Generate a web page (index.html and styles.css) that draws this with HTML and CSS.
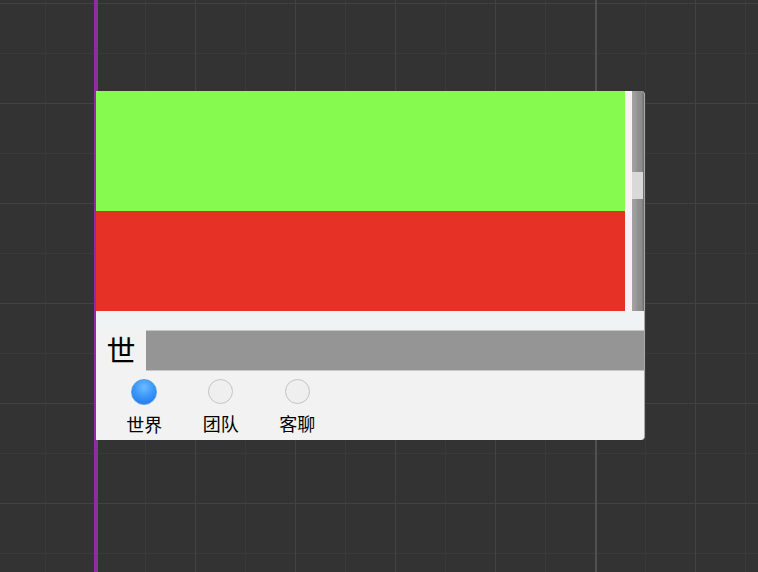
FILE: index.html
```html
<!DOCTYPE html>
<html lang="zh">
<head>
<meta charset="utf-8">
<title>Chat Panel</title>
<link rel="stylesheet" href="styles.css">
</head>
<body>
<div class="canvas">
  <div class="guide"></div>
  <div class="panel">
    <div class="messages">
      <div class="content">
        <div class="block green"></div>
        <div class="block red"></div>
      </div>
      <div class="gutter"></div>
      <div class="scrollbar"><div class="thumb"></div></div>
    </div>
    <div class="spacer"></div>
    <div class="input-row">
      <div class="channel">世</div>
      <div class="field"></div>
    </div>
    <div class="tabs">
      <div class="tab">
        <span class="radio checked"></span>
        <span class="tab-label">世界</span>
      </div>
      <div class="tab">
        <span class="radio"></span>
        <span class="tab-label">团队</span>
      </div>
      <div class="tab">
        <span class="radio"></span>
        <span class="tab-label">客聊</span>
      </div>
    </div>
  </div>
</div>
</body>
</html>
```

FILE: styles.css
```css
html, body {
  margin: 0;
  padding: 0;
}

body {
  width: 758px;
  height: 572px;
  overflow: hidden;
  background-color: #333333;
  font-family: "Noto Sans CJK SC", "Noto Sans", sans-serif;
}

.canvas {
  position: relative;
  width: 758px;
  height: 572px;
  box-sizing: border-box;
  padding: 91px 0 0 96px;
  background-color: #333333;
  background-image:
    linear-gradient(to right, transparent 595px, #505050 595px, #505050 597px, transparent 597px),
    linear-gradient(to right, #424242 1px, transparent 1px),
    linear-gradient(to bottom, #424242 1px, transparent 1px),
    linear-gradient(to right, #3a3a3a 1px, transparent 1px),
    linear-gradient(to bottom, #3a3a3a 1px, transparent 1px);
  background-size:
    100% 100%,
    100px 100%,
    100% 100px,
    50px 100%,
    100% 50px;
  background-position:
    0 0,
    95px 0,
    0 3px,
    45px 0,
    0 3px;
  background-repeat: no-repeat, repeat-x, repeat-y, repeat-x, repeat-y;
}

.guide {
  position: absolute;
  left: 94px;
  top: 0;
  width: 4px;
  height: 100%;
  background: #8a2f9c;
}

.panel {
  position: relative;
  width: 549px;
  height: 349px;
  box-sizing: border-box;
  background: #f2f2f2;
  border-right: 1px solid #a9a9a9;
  border-radius: 0 4px 4px 0;
  overflow: hidden;
  display: flex;
  flex-direction: column;
}

.messages {
  display: flex;
  height: 220px;
  flex: none;
}

.content {
  width: 529px;
  display: flex;
  flex-direction: column;
}

.block.green {
  height: 120px;
  background: #86fa4f;
}

.block.red {
  height: 100px;
  background: #e53126;
}

.gutter {
  width: 7px;
  background: #f6f2f6;
}

.scrollbar {
  position: relative;
  width: 12px;
  background: linear-gradient(to right, #a3a3a3 0, #9a9a9a 4px, #8f8f8f 6px, #8c8c8c 10px, #727272 11px);
}

.thumb {
  position: absolute;
  left: 0;
  top: 81px;
  width: 11px;
  height: 27px;
  background: #d9d9d9;
}

.spacer {
  height: 19px;
  flex: none;
  background: #f0f3f3;
}

.input-row {
  display: flex;
  align-items: center;
  height: 41px;
  flex: none;
}

.channel {
  width: 50px;
  text-align: center;
  font-size: 29px;
  line-height: 36px;
  color: #000000;
  margin-top: -4px;
}

.field {
  flex: 1;
  align-self: stretch;
  box-sizing: border-box;
  background: #959595;
  border-top: 1px solid #c6c6c6;
  border-bottom: 1px solid #c6c6c6;
}

.tabs {
  display: flex;
  padding-left: 10px;
  padding-top: 8px;
}

.tab {
  width: 76.5px;
  display: flex;
  flex-direction: column;
  align-items: center;
}

.radio {
  display: block;
  width: 25px;
  height: 25px;
  box-sizing: border-box;
  border-radius: 50%;
  border: 1px solid #c4c4c4;
  background: #efefef;
}

.radio.checked {
  width: 26px;
  height: 26px;
  border: 1px solid #4f9fe8;
  background: radial-gradient(circle at 50% 30%, #6fbcff 0, #3c98f8 45%, #1d6fe6 100%);
}

.tab-label {
  display: block;
  margin-top: 8px;
  font-size: 18px;
  line-height: 22px;
  font-weight: 400;
  color: #000000;
}
```
